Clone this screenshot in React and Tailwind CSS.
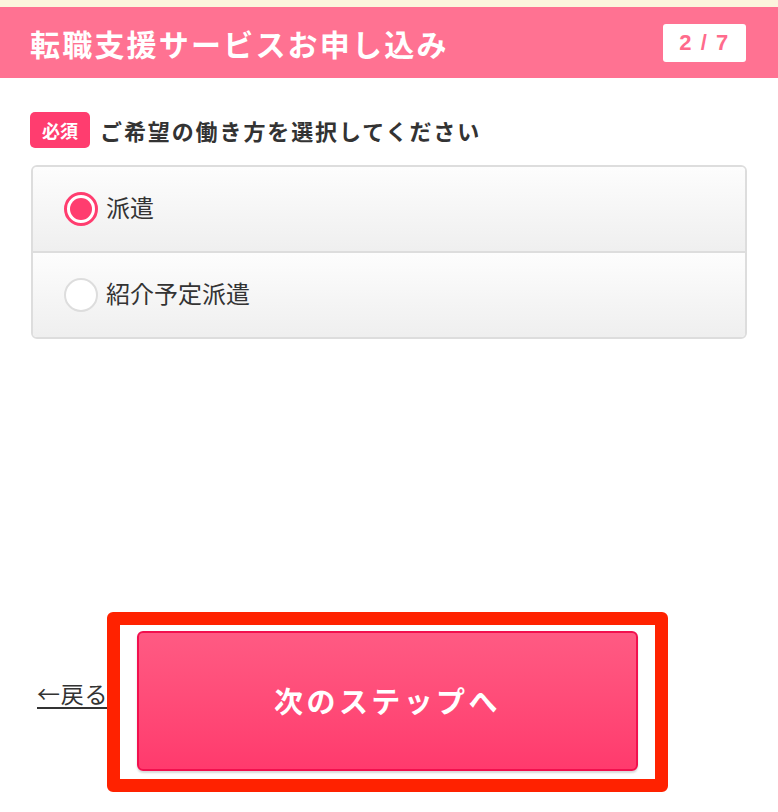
import React from "react";

const jp = { fontFamily: '"Noto Sans CJK JP", "Noto Sans", sans-serif' };

function Radio({ checked }) {
  return checked ? (
    <span className="flex h-[34px] w-[34px] items-center justify-center rounded-full border-[3px] border-[#ff3d6f] bg-white">
      <span className="h-[22px] w-[22px] rounded-full bg-[#ff3d6f]" />
    </span>
  ) : (
    <span className="h-[34px] w-[34px] rounded-full border-2 border-[#dddddd] bg-white" />
  );
}

export default function App() {
  return (
    <div className="flex h-[812px] w-[778px] flex-col bg-white text-[#333333]" style={jp}>
      <div className="h-[7px] bg-[#fcf5dd]" />
      <div className="flex h-[71px] items-center justify-between bg-[#ff7292] pl-[30px] pr-[32px]">
        <h1 className="text-[30px] font-bold leading-none tracking-[2.2px] text-white">
          転職支援サービスお申し込み
        </h1>
        <div className="flex h-[38px] w-[83px] items-center justify-center rounded-[3px] bg-white">
          <span
            className="text-[22px] font-bold leading-none tracking-[1.5px] text-[#ff6b8c]"
            style={{ fontFamily: '"Liberation Sans", Arial, sans-serif' }}
          >
            2 / 7
          </span>
        </div>
      </div>

      <div className="px-[31px] pt-[34px]">
        <div className="flex items-center gap-[10px]">
          <span className="ml-[-1px] flex h-[36px] w-[60px] items-center justify-center rounded-[5px] bg-[#ff3d6f] text-[18px] font-bold leading-none text-white">
            必須
          </span>
          <span className="text-[22px] font-bold leading-none tracking-[1.9px] text-[#333333]">
            ご希望の働き方を選択してください
          </span>
        </div>

        <div className="mt-[17px] overflow-hidden rounded-[6px] border-2 border-[#dddddd]">
          <label className="flex h-[84px] items-center gap-[8px] bg-gradient-to-b from-[#fdfdfd] to-[#efefef] pl-[31px]">
            <Radio checked />
            <span className="mt-[-4px] text-[24px] leading-none text-[#333333]">派遣</span>
          </label>
          <div className="h-[2px] bg-[#dddddd]" />
          <label className="flex h-[84px] items-center gap-[8px] bg-gradient-to-b from-[#fdfdfd] to-[#efefef] pl-[31px]">
            <Radio />
            <span className="mt-[-4px] text-[24px] leading-none text-[#333333]">紹介予定派遣</span>
          </label>
        </div>
      </div>

      <div className="mt-[273px] flex items-center">
        <div className="ml-[37px] w-[70px] shrink-0 whitespace-nowrap pb-[14px]">
          <a className="text-[23px] leading-none tracking-[0.8px] text-[#333333] underline decoration-[2px] underline-offset-[4px]">
            ←戻る
          </a>
        </div>
        <div className="rounded-[6px] border-[13px] border-[#ff2200] bg-white pb-[8px] pl-[17px] pr-[17px] pt-[6px]">
          <button className="flex h-[140px] w-[501px] items-center justify-center rounded-[6px] border-2 border-[#f2104e] bg-gradient-to-b from-[#ff5a83] to-[#ff3a6d] text-[29px] font-bold tracking-[3.4px] text-white shadow-[0_2px_2px_rgba(0,0,0,0.15)]">
            次のステップへ
          </button>
        </div>
      </div>
    </div>
  );
}
